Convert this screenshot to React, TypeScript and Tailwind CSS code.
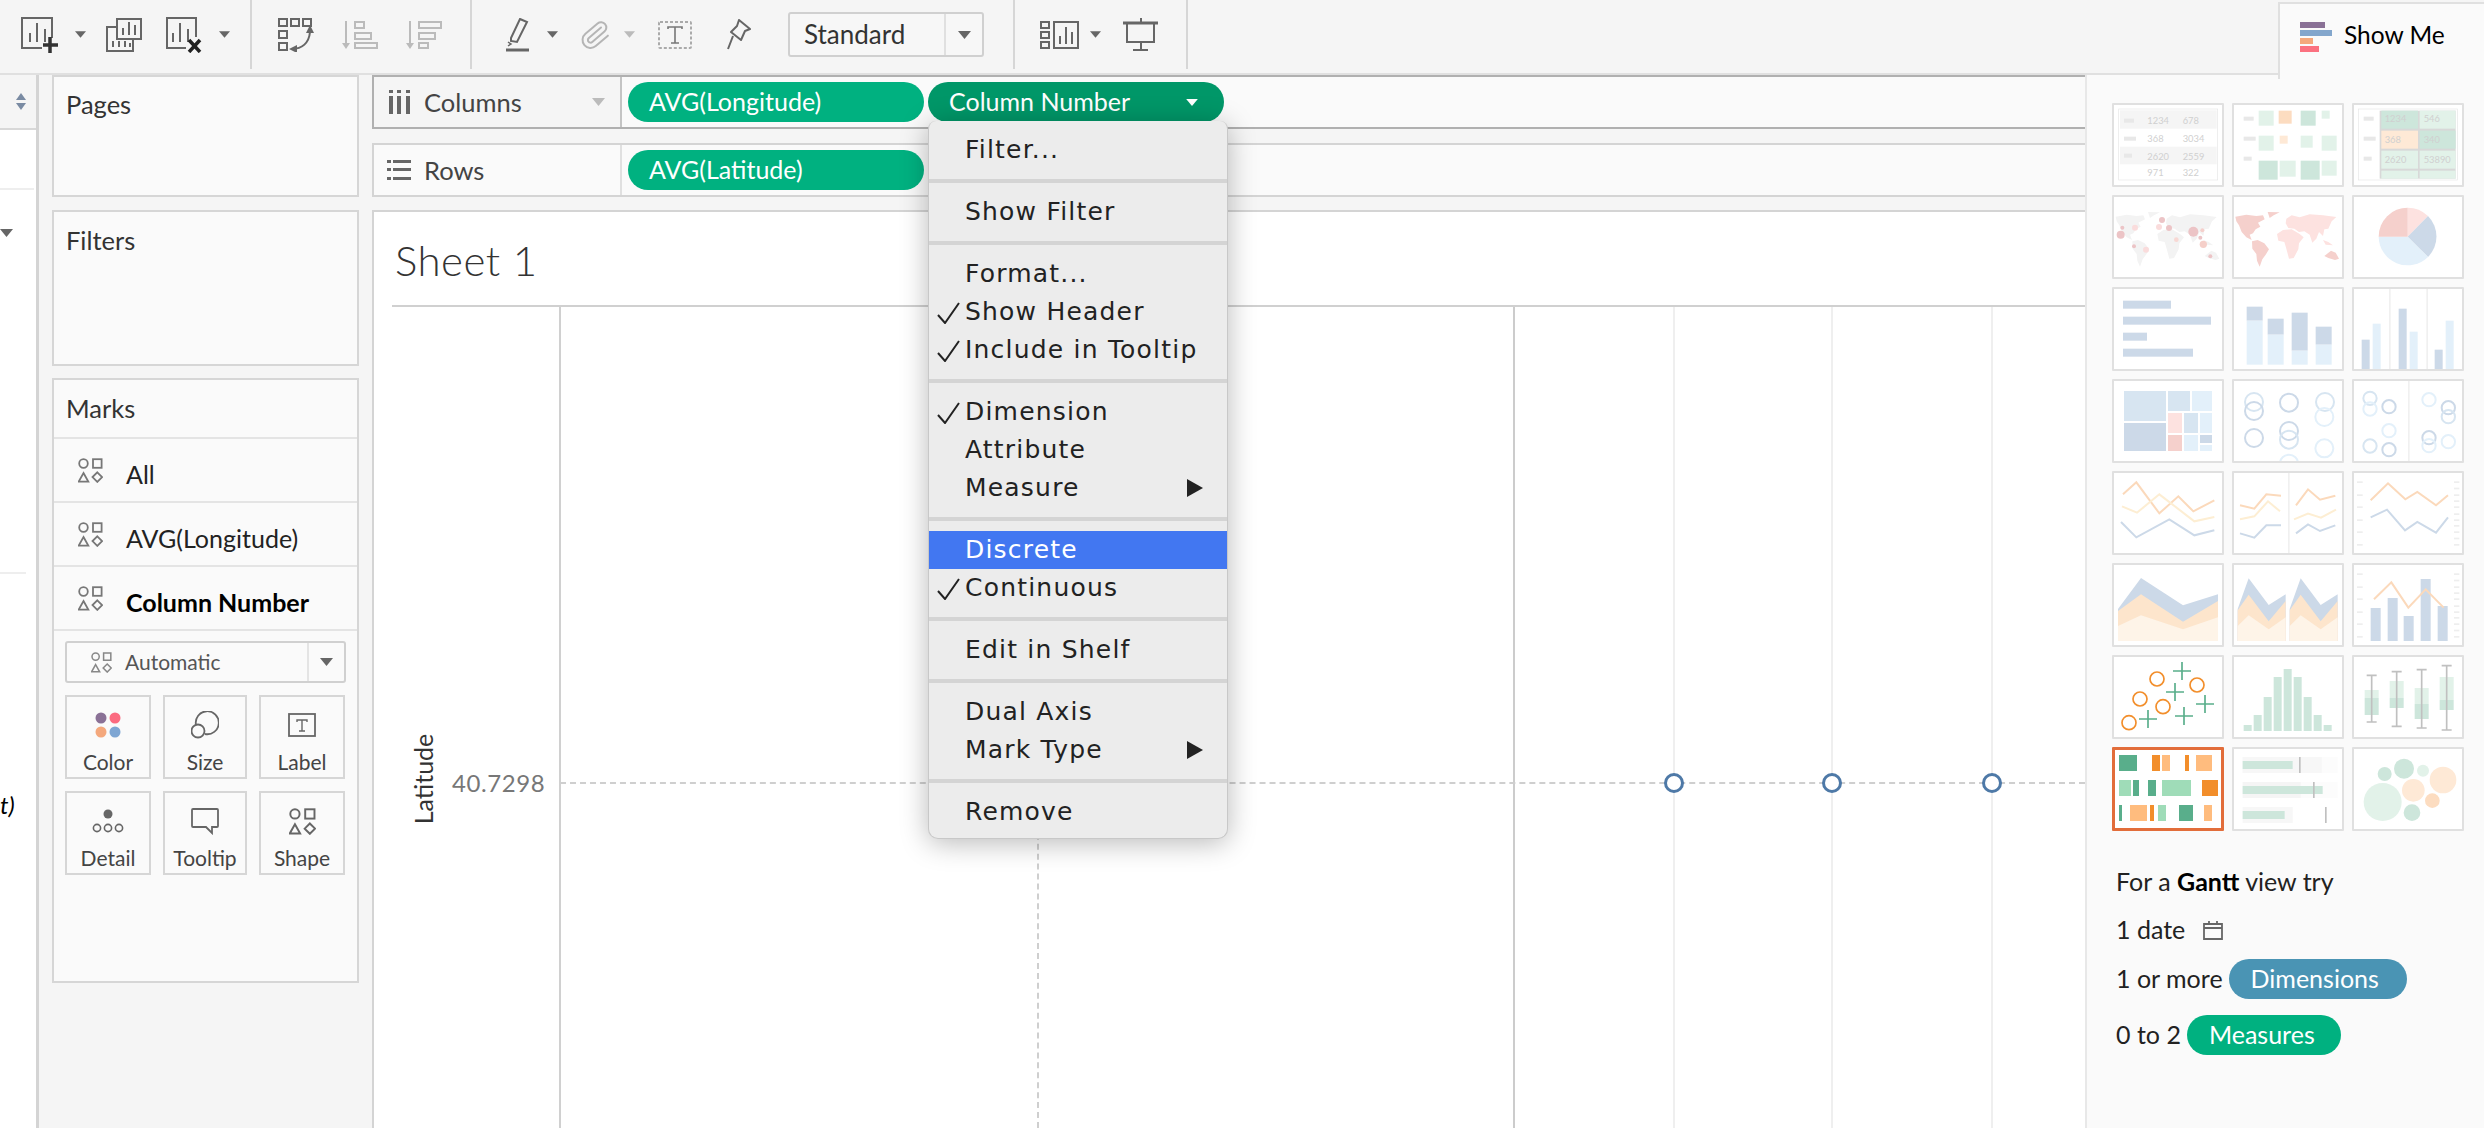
import React from 'react';
import { Paperclip } from 'lucide-react';

const Caret: React.FC<{ className?: string; w?: number; h?: number; color?: string }> = ({ className = '', w = 11, h = 7, color = '#666' }) => (
    <svg width={w} height={h} viewBox="0 0 10 6" className={className}>
        <path d="M0 0h10L5 6z" fill={color} />
    </svg>
);

const Sep: React.FC<{ className: string }> = ({ className }) => <div className={`w-[2px] h-[69px] bg-[#d6d6d6] ${className}`} />;

const NewSheetIcon = () => (
    <svg width="37" height="36" viewBox="0 0 37 36" className="ml-[21px]">
        <path d="M31 21V1H1v30h20" fill="none" stroke="#666" strokeWidth="2" />
        <path d="M9 25v-9M16 25V6M24 25V12" stroke="#666" strokeWidth="2" />
        <path d="M29 20v16M22 28h15" stroke="#333" strokeWidth="3.5" />
    </svg>
);

const DuplicateIcon = () => (
    <svg width="36" height="34" viewBox="0 0 36 34" className="ml-[20px]">
        <path d="M11 1h24v20H11z" fill="none" stroke="#666" strokeWidth="2" />
        <path d="M11 9H1v24h26V21" fill="none" stroke="#666" strokeWidth="2" />
        <path d="M17 17v-7M23 17V4M29 17V7M7 29v-6M13 29v-6M19 29v-6M24 29v-4" stroke="#666" strokeWidth="2" />
    </svg>
);

const ClearIcon = () => (
    <svg width="36" height="36" viewBox="0 0 36 36" className="ml-[24px]">
        <path d="M30 20V1H1v30h19" fill="none" stroke="#666" strokeWidth="2" />
        <path d="M7 25v-9M14 25V6M22 25V12" stroke="#666" strokeWidth="2" />
        <path d="M23 23l11 12M34 23L23 35" stroke="#222" strokeWidth="3.5" />
    </svg>
);

const SwapIcon = () => (
    <svg width="36" height="34" viewBox="0 0 36 34">
        <g fill="none" stroke="#666" strokeWidth="2">
            <rect x="1" y="1" width="8" height="7" />
            <rect x="13" y="1" width="8" height="7" />
            <rect x="25" y="1" width="8" height="7" />
            <rect x="1" y="13" width="8" height="7" />
            <rect x="1" y="25" width="8" height="7" />
            <path d="M14 31c10 0 17-6 18-17" />
        </g>
        <path d="M32 7l4 8h-8zM11 31l8-4v8z" fill="#666" />
    </svg>
);

const SortIcon: React.FC<{ desc?: boolean }> = ({ desc }) => (
    <svg width="36" height="28" viewBox="0 0 36 28" className="ml-[28px]">
        <path d="M4 0v24" stroke="#bbb" strokeWidth="2" />
        <path d="M0 22h8l-4 6z" fill="#bbb" />
        <g fill="none" stroke="#bbb" strokeWidth="2">
            {desc ? (
                <>
                    <rect x="13" y="1" width="22" height="6" />
                    <rect x="13" y="12" width="16" height="6" />
                    <rect x="13" y="22" width="9" height="5" />
                </>
            ) : (
                <>
                    <rect x="13" y="1" width="9" height="6" />
                    <rect x="13" y="12" width="16" height="6" />
                    <rect x="13" y="22" width="22" height="5" />
                </>
            )}
        </g>
    </svg>
);

const PenIcon = () => (
    <svg width="23" height="34" viewBox="0 0 23 34" className="ml-[34px]">
        <path d="M14 1l7 3-10 20-6-1 0-3z" fill="none" stroke="#666" strokeWidth="2" />
        <path d="M2 24l3 2-3 2" fill="none" stroke="#666" strokeWidth="1.5" />
        <path d="M0 32h23" stroke="#666" strokeWidth="3" />
    </svg>
);

const TextBoxIcon = () => (
    <svg width="34" height="28" viewBox="0 0 34 28" className="ml-[23px]">
        <rect x="1" y="1" width="32" height="26" rx="1" fill="none" stroke="#aaa" strokeWidth="2" strokeDasharray="3 2" />
        <path d="M10 8V6h14v2M17 6v16M13 22h8" fill="none" stroke="#777" strokeWidth="1.6" />
    </svg>
);

const PinIcon = () => (
    <svg width="26" height="31" viewBox="0 0 26 31" className="ml-[33px]">
        <path d="M14 1l11 9-5 2-4 9-10-8 6-6zM8 17L3 30" fill="none" stroke="#666" strokeWidth="2" strokeLinejoin="round" />
    </svg>
);

const ShowCardsIcon = () => (
    <svg width="39" height="28" viewBox="0 0 39 28">
        <g fill="none" stroke="#666" strokeWidth="2">
            <rect x="1" y="1" width="8" height="6" />
            <rect x="1" y="11" width="8" height="6" />
            <rect x="1" y="21" width="8" height="6" />
            <rect x="14" y="1" width="24" height="26" />
        </g>
        <path d="M20 23v-8M26 23V6M32 23V11" stroke="#666" strokeWidth="2" />
    </svg>
);

const PresentIcon = () => (
    <svg width="35" height="33" viewBox="0 0 35 33" className="ml-[22px]">
        <path d="M0 5h35" stroke="#666" strokeWidth="3" />
        <path d="M18 0v4M4 6v18h27V6M18 24v8M10 32h15" fill="none" stroke="#666" strokeWidth="2" />
    </svg>
);

const Toolbar = () => (
    <div className="h-[75px] flex border-b-2 border-[#e0e0e0] shrink-0 relative">
        <div className="flex items-center h-[69px] flex-1">
            <NewSheetIcon />
            <Caret className="ml-[17px]" />
            <DuplicateIcon />
            <ClearIcon />
            <Caret className="ml-[17px]" />
            <Sep className="ml-[20px] mr-[26px]" />
            <SwapIcon />
            <SortIcon />
            <SortIcon desc />
            <Sep className="ml-[28px]" />
            <PenIcon />
            <Caret className="ml-[18px]" />
            <Paperclip size={32} strokeWidth={1.5} color="#b5b5b5" className="ml-[21px] rotate-[5deg]" />
            <Caret className="ml-[13px]" color="#bbb" />
            <TextBoxIcon />
            <PinIcon />
            <div className="ml-[37px] w-[196px] h-[45px] border-2 border-[#d0d0d0] rounded-[3px] flex items-center bg-[#f7f7f7]">
                <span className="flex-1 pl-[14px] text-[26px] text-[#333]">Standard</span>
                <div className="w-[38px] h-full border-l-2 border-[#e0e0e0] flex items-center justify-center">
                    <Caret w={13} h={8} />
                </div>
            </div>
            <Sep className="ml-[29px] mr-[25px]" />
            <ShowCardsIcon />
            <Caret className="ml-[11px]" />
            <PresentIcon />
            <Sep className="ml-[28px]" />
        </div>
        <div className="w-[206px] h-[77px] mt-[2px] border-t-2 border-l-2 border-[#e0e0e0] bg-[#fafafa] flex items-center pl-[20px] gap-[12px] -mb-[2px] z-10 shrink-0">
            <div className="flex flex-col gap-[2px] w-[32px] -mt-[10px]">
                <div className="h-[6px] w-[25px] bg-[#8a7196]" />
                <div className="h-[6px] w-[32px] bg-[#83a6cc]" />
                <div className="h-[6px] w-[13px] bg-[#f4a87c]" />
                <div className="h-[6px] w-[19px] bg-[#fb7180]" />
            </div>
            <span className="text-[24.5px] text-black -mt-[12px]">Show Me</span>
        </div>
    </div>
);

const MarkShapes: React.FC<{ size?: number; color?: string }> = ({ size = 25, color = '#777' }) => (
    <svg width={size} height={size} viewBox="0 0 25 25" className="shrink-0">
        <g fill="none" stroke={color} strokeWidth="1.8">
            <circle cx="5.5" cy="5.5" r="4.3" />
            <rect x="15" y="1.2" width="8.6" height="8.6" />
            <path d="M5.5 15l4.8 8.6H.7z" />
            <path d="M19.3 14.3l4.8 4.8-4.8 4.8-4.8-4.800z" />
        </g>
    </svg>
);

const MarkRow: React.FC<{ label: string; bold?: boolean }> = ({ label, bold }) => (
    <div className="h-[64px] border-b-2 border-[#e4e4e4] flex items-center pl-[24px] gap-[23px] shrink-0">
        <MarkShapes />
        <span className={`text-[25px] mt-[10px] ${bold ? 'font-bold text-black' : 'text-[#222]'}`}>{label}</span>
    </div>
);

const MarkCard: React.FC<{ label: string; children: React.ReactNode }> = ({ label, children }) => (
    <div className="h-[84px] border-2 border-[#d6d6d6] flex flex-col items-center">
        <div className="h-[50px] flex items-center justify-center mt-[3px]">{children}</div>
        <span className="text-[21px] leading-[24px] text-[#444]">{label}</span>
    </div>
);

const SidePanels = () => (
    <div className="flex shrink-0 h-full">
        <div className="w-[39px] border-r-[3px] border-[#d4d4d4] flex flex-col shrink-0 bg-white overflow-hidden">
            <div className="h-[55px] bg-[#f5f5f5] border-b-2 border-[#d8d8d8] flex items-center justify-end pr-[9px] shrink-0">
                <svg width="12" height="18" viewBox="0 0 12 18">
                    <path d="M6 0l5 7H1z" fill="#7a8ba3" />
                    <path d="M1 10h10l-5 7z" fill="#7a8ba3" />
                </svg>
            </div>
            <div className="h-[60px] border-b-2 border-[#eee] mr-[2px] shrink-0" />
            <div className="h-[382px] pt-[39px] shrink-0">
                <Caret w={13} h={8} />
            </div>
            <div className="h-[2px] w-[26px] bg-[#eee] shrink-0" />
            <div className="mt-[216px] text-[24px] italic text-black leading-[30px] whitespace-nowrap">t)</div>
        </div>
        <div className="w-[333px] pl-[13px] pr-[13px] flex flex-col shrink-0">
            <div className="h-[122px] border-2 border-[#d6d6d6] bg-[#fafafa] pl-[12px] pt-[11px] text-[25.5px] leading-[32px] text-[#333] shrink-0">Pages</div>
            <div className="h-[156px] mt-[13px] border-2 border-[#d6d6d6] bg-[#fafafa] pl-[12px] pt-[12px] text-[25.5px] leading-[32px] text-[#333] shrink-0">Filters</div>
            <div className="h-[605px] mt-[12px] border-2 border-[#d6d6d6] bg-[#fafafa] flex flex-col shrink-0">
                <div className="h-[59px] border-b-2 border-[#e4e4e4] pl-[12px] flex items-center text-[25.5px] text-[#333] shrink-0">Marks</div>
                <MarkRow label="All" />
                <MarkRow label="AVG(Longitude)" />
                <MarkRow label="Column Number" bold />
                <div className="px-[11px] pt-[10px] flex flex-col gap-[12px]">
                    <div className="h-[42px] border-2 border-[#d0d0d0] rounded-[3px] flex items-center">
                        <div className="flex-1 flex items-center pl-[24px] gap-[13px] text-[21px] text-[#555]">
                            <MarkShapes size={21} color="#888" />
                            Automatic
                        </div>
                        <div className="w-[37px] h-full border-l-2 border-[#e4e4e4] flex items-center justify-center">
                            <Caret w={13} h={8} />
                        </div>
                    </div>
                    <div className="grid grid-cols-[86px_84px_86px] gap-x-[12px] gap-y-[12px]">
                        <MarkCard label="Color">
                            <svg width="26" height="26" viewBox="0 0 26 26">
                                <circle cx="6" cy="6" r="5.5" fill="#8a7196" />
                                <circle cx="20" cy="6" r="5.5" fill="#fb6b80" />
                                <circle cx="6" cy="20" r="5.5" fill="#f4a87c" />
                                <circle cx="20" cy="20" r="5.5" fill="#7ea6d3" />
                            </svg>
                        </MarkCard>
                        <MarkCard label="Size">
                            <svg width="28" height="28" viewBox="0 0 28 28" fill="none" stroke="#666" strokeWidth="1.8">
                                <path d="M5 14a11.5 11.5 0 1 1 9 9" />
                                <circle cx="7" cy="20" r="6.5" />
                            </svg>
                        </MarkCard>
                        <MarkCard label="Label">
                            <svg width="28" height="24" viewBox="0 0 28 24">
                                <rect x="1" y="1" width="26" height="22" fill="none" stroke="#666" strokeWidth="1.8" />
                                <path d="M9 9V7h10v2M14 7v11M11 18h6" fill="none" stroke="#666" strokeWidth="1.4" />
                            </svg>
                        </MarkCard>
                        <MarkCard label="Detail">
                            <svg width="32" height="26" viewBox="0 0 32 26">
                                <circle cx="16" cy="6" r="4.5" fill="#666" />
                                <g fill="none" stroke="#666" strokeWidth="1.6">
                                    <circle cx="5" cy="20" r="3.6" />
                                    <circle cx="16" cy="20" r="3.6" />
                                    <circle cx="27" cy="20" r="3.6" />
                                </g>
                            </svg>
                        </MarkCard>
                        <MarkCard label="Tooltip">
                            <svg width="28" height="27" viewBox="0 0 28 27">
                                <path d="M2 1h24a1 1 0 0 1 1 1v16a1 1 0 0 1-1 1h-5v6l-6-6H2a1 1 0 0 1-1-1V2a1 1 0 0 1 1-1z" fill="none" stroke="#666" strokeWidth="1.8" />
                            </svg>
                        </MarkCard>
                        <MarkCard label="Shape">
                            <MarkShapes size={27} color="#666" />
                        </MarkCard>
                    </div>
                </div>
            </div>
        </div>
    </div>
);

const Pill: React.FC<{ label: string; dark?: boolean }> = ({ label, dark }) => (
    <div className={`w-[296px] h-[40px] rounded-[20px] flex items-center justify-between pl-[21px] pr-[26px] text-[25px] text-white shrink-0 ${dark ? 'bg-[#009768]' : 'bg-[#00b180]'}`}>
        <span className="whitespace-nowrap">{label}</span>
        {dark && <Caret w={12} h={7} color="#fff" />}
    </div>
);

const ColumnsGlyph = () => (
    <svg width="21" height="24" viewBox="0 0 21 24">
        <path d="M0 0h4v3H0zM8 0h4v3H8zM17 0h4v3h-4zM0 6h4v18H0zM8 6h4v18H8zM17 6h4v18h-4z" fill="#666" />
    </svg>
);

const RowsGlyph = () => (
    <svg width="24" height="20" viewBox="0 0 24 20">
        <path d="M0 0h4v3H0zM6 0h18v3H6zM0 8h4v3H0zM6 8h18v3H6zM0 17h4v3H0zM6 17h18v3H6z" fill="#666" />
    </svg>
);

const Shelf: React.FC<{ label: string; glyph: React.ReactNode; active?: boolean; caret?: boolean; children: React.ReactNode; className?: string }> = ({ label, glyph, active, caret, children, className = '' }) => (
    <div className={`h-[54px] flex items-center border-y-2 border-l-2 bg-[#fafafa] shrink-0 ${active ? 'border-[#b0b0b0]' : 'border-[#d4d4d4]'} ${className}`}>
        <div className={`w-[248px] h-full flex items-center border-r-2 shrink-0 ${active ? 'bg-[#f5f5f5] border-[#c4c4c4]' : 'border-[#e0e0e0]'}`}>
            <div className="w-[24px] ml-[13px] flex justify-center">{glyph}</div>
            <span className="ml-[13px] text-[25.5px] text-[#444] flex-1">{label}</span>
            {caret && <Caret className="mr-[15px]" w={13} h={8} color="#bbb" />}
        </div>
        <div className="pl-[6px] flex gap-[4px]">{children}</div>
    </div>
);

const Check = () => (
    <svg width="23" height="22" viewBox="0 0 23 22" className="absolute left-[8px] top-[9px]">
        <path d="M1 13l7 8L22 1" fill="none" stroke="#222" strokeWidth="2" />
    </svg>
);

const MenuItem: React.FC<{ label: string; check?: boolean; sub?: boolean; active?: boolean }> = ({ label, check, sub, active }) => (
    <div className={`relative h-[38px] flex items-center pl-[36px] pr-[24px] justify-between ${active ? 'bg-[#4277f1] text-white' : 'text-[#222]'}`}>
        {check && <Check />}
        <span>{label}</span>
        {sub && (
            <svg width="16" height="18" viewBox="0 0 16 18">
                <path d="M0 0l16 9L0 18z" fill="#222" />
            </svg>
        )}
    </div>
);

const MenuGroup: React.FC<{ last?: boolean; children: React.ReactNode }> = ({ last, children }) => (
    <div className={`pt-[10px] ${last ? 'pb-[7px]' : 'pb-[10px] border-b-4 border-[#d4d4d4]'}`}>{children}</div>
);

const PillMenu = () => (
    <div className="absolute left-[928px] top-[121px] w-[300px] rounded-b-[10px] rounded-t-[8px] bg-[#ececec] shadow-[0_4px_28px_rgba(0,0,0,0.28)] border-x border-b border-[#c8c8c8] font-['DejaVu_Sans',sans-serif] text-[25px] z-20 tracking-[1.2px]">
        <MenuGroup><MenuItem label="Filter..." /></MenuGroup>
        <MenuGroup><MenuItem label="Show Filter" /></MenuGroup>
        <MenuGroup>
            <MenuItem label="Format..." />
            <MenuItem label="Show Header" check />
            <MenuItem label="Include in Tooltip" check />
        </MenuGroup>
        <MenuGroup>
            <MenuItem label="Dimension" check />
            <MenuItem label="Attribute" />
            <MenuItem label="Measure" sub />
        </MenuGroup>
        <MenuGroup>
            <MenuItem label="Discrete" active />
            <MenuItem label="Continuous" check />
        </MenuGroup>
        <MenuGroup><MenuItem label="Edit in Shelf" /></MenuGroup>
        <MenuGroup>
            <MenuItem label="Dual Axis" />
            <MenuItem label="Mark Type" sub />
        </MenuGroup>
        <MenuGroup last><MenuItem label="Remove" /></MenuGroup>
    </div>
);

const chartLines = [
    { x: 185, color: '#d0d0d0' },
    { x: 1139, color: '#cccccc' },
    { x: 1299, color: '#efefef' },
    { x: 1457, color: '#efefef' },
    { x: 1617, color: '#efefef' },
];

const Chart = () => (
    <div className="relative flex-1 overflow-hidden">
        {chartLines.map((l) => (
            <div key={l.x} className="absolute top-0 bottom-0 w-[2px]" style={{ left: l.x, background: l.color }} />
        ))}
        <div className="absolute left-[186px] right-0 top-[475px] border-t-2 border-dashed border-[#cfcfcf]" />
        <div className="absolute left-[663px] top-0 bottom-0 border-l-2 border-dashed border-[#cfcfcf]" />
        {[1300, 1458, 1618].map((x) => (
            <div key={x} className="absolute top-[466px] w-[20px] h-[20px] rounded-full bg-white border-[3px] border-[#4e79a7]" style={{ left: x - 10 }} />
        ))}
        <div className="absolute left-[78px] top-[476px] -translate-y-1/2 text-[24px] tracking-[0.6px] text-[#777] leading-none">40.7298</div>
        <div className="absolute left-[49px] top-[472px] -translate-x-1/2 -translate-y-1/2 -rotate-90 text-[25px] text-[#333] leading-none whitespace-nowrap">Latitude</div>
    </div>
);

const Thumb: React.FC<{ col: number; y0: number; selected?: boolean; children: React.ReactNode }> = ({ col, y0, selected, children }) => (
    <div className={`w-[112px] h-[84px] bg-white border-2 ${selected ? 'border-[#e26d3a] outline-2 outline-[#e26d3a] -outline-offset-3' : 'border-[#e0e0e0]'} rounded-[1px] overflow-hidden`}>
        <svg width="108" height="80" viewBox={`${[72, 433, 793][col]} ${y0 + 6} 324 240`} className="block">
            {children}
        </svg>
    </div>
);

type R = [number, number, number, number, string];
const Rects: React.FC<{ items: R[] }> = ({ items }) => (
    <>
        {items.map(([x1, x2, y1, y2, fill], i) => (
            <rect key={i} x={x1} y={y1} width={x2 - x1} height={y2 - y1} fill={fill} />
        ))}
    </>
);

type C = [number, number, number, string];
const Circles: React.FC<{ items: C[]; stroke?: number }> = ({ items, stroke }) => (
    <>
        {items.map(([cx, cy, r, c], i) =>
            stroke ? (
                <circle key={i} cx={cx} cy={cy} r={r} fill="none" stroke={c} strokeWidth={stroke} />
            ) : (
                <circle key={i} cx={cx} cy={cy} r={r} fill={c} />
            ),
        )}
    </>
);

const Line: React.FC<{ pts: string; color: string }> = ({ pts, color }) => (
    <polyline points={pts} fill="none" stroke={color} strokeWidth="6" />
);

const NumText: React.FC<{ x: number; y: number; t: string }> = ({ x, y, t }) => (
    <text x={x} y={y} fontSize="28" fill="#d0d0d0">{t}</text>
);

const G1 = '#e2f2e9', G2 = '#cde6db', O1 = '#fcdcc0', O2 = '#fee9d6';
const B1 = '#ccd9e8', B2 = '#e3f0fa', B3 = '#d7e5f1', R1 = '#f5d0cc', R2 = '#fde2e0';
const LO = '#fbd9bb', LY = '#fdeed3';
const GD = '#59ae8b', GL = '#9fdcb8', OD = '#f28e2b', OL = '#ffbc7e';

const mapPaths = (c1: string, c2: string, dx: number) => (
    <g transform={`translate(${dx} 0)`}>
        <path d="M437 654L470 648 500 652 520 650 525 662 505 672 512 684 498 692 490 704 480 708 486 724 470 716 456 700 448 680 440 668z" fill={c1} />
        <path d="M534 640L570 641 552 650 540 658z" fill={c1} />
        <path d="M487 728L504 724 524 734 538 752 528 768 518 782 510 804 502 786 500 766 488 750z" fill={c1} />
        <path d="M590 660L606 650 630 656 660 647 700 650 740 655 726 668 716 690 704 692 700 712 688 700 680 720 668 732 660 708 644 698 628 700 614 690 596 688 588 674z" fill={c2} />
        <path d="M562 706L580 694 606 692 630 706 642 716 628 734 626 752 612 778 598 780 590 750 584 730 566 726z" fill={c2} />
        <path d="M700 724L716 730 730 740 708 738z" fill={c2} />
        <path d="M704 772L724 756 738 762 748 780 736 784 716 778z" fill={c1} />
    </g>
);

const dashes = (xs: [number, number], ys: number[]): R[] => ys.map((y) => [xs[0], xs[1], y - 2, y + 3, '#eeeeee'] as R);
const ticks6 = [0, 39, 75, 114, 150, 188];
const ticks11 = [0, 19, 39, 57, 75, 96, 114, 131, 150, 169, 188];

const ShowMeGrid = () => (
    <div className="grid grid-cols-[112px_112px_112px] gap-x-[8px] gap-y-[8px]">
        <Thumb col={0} y0={313}>
            <rect x="86" y="331" width="297" height="213" fill="none" stroke="#e6e6e6" strokeWidth="2" />
            <Rects items={[[90, 380, 335, 390, '#f5f5f5'], [90, 380, 444, 497, '#f5f5f5'], [102, 132, 360, 372, '#e8e8e8'], [102, 138, 414, 426, '#e8e8e8'], [102, 126, 465, 477, '#e8e8e8']]} />
            <NumText x={172} y={375} t="1234" /><NumText x={278} y={375} t="678" />
            <NumText x={172} y={429} t="368" /><NumText x={278} y={429} t="3034" />
            <NumText x={172} y={483} t="2620" /><NumText x={278} y={483} t="2559" />
            <NumText x={172} y={531} t="971" /><NumText x={278} y={531} t="322" />
        </Thumb>
        <Thumb col={1} y0={313}>
            <Rects items={[[462, 492, 354, 366, '#e8e8e8'], [462, 498, 414, 426, '#e8e8e8'], [462, 486, 474, 486, '#e8e8e8'],
                [507, 552, 336, 381, G1], [567, 606, 336, 375, O1], [633, 678, 336, 381, G2], [696, 720, 336, 360, G1],
                [507, 552, 411, 456, G1], [570, 594, 411, 435, O2], [633, 669, 411, 447, G1], [696, 741, 411, 456, G1],
                [507, 564, 486, 543, G2], [570, 618, 486, 534, G1], [633, 690, 486, 543, G2], [696, 741, 486, 531, G1]]} />
        </Thumb>
        <Thumb col={2} y0={313}>
            <rect x="806" y="331" width="297" height="213" fill="none" stroke="#e6e6e6" strokeWidth="2" />
            <Rects items={[[822, 852, 354, 366, '#e8e8e8'], [822, 858, 414, 426, '#e8e8e8'], [822, 846, 474, 486, '#e8e8e8'],
                [870, 1098, 336, 540, '#d8d8d8'],
                [875, 985, 336, 390, G2], [990, 1098, 336, 390, G1], [875, 985, 396, 450, O2], [990, 1098, 396, 450, G2],
                [875, 985, 456, 510, G1], [990, 1098, 456, 510, G1], [875, 985, 516, 540, G1], [990, 1098, 516, 540, G1]]} />
            <NumText x={885} y={370} t="1234" /><NumText x={1002} y={370} t="546" />
            <NumText x={885} y={432} t="368" /><NumText x={1002} y={432} t="340" />
            <NumText x={885} y={492} t="2620" /><NumText x={1002} y={492} t="53890" />
        </Thumb>

        <Thumb col={0} y0={589}>
            {mapPaths('#f3f3f3', '#f3f3f3', -360)}
            <Circles items={[[216, 664, 9, '#ecc4c6'], [97, 687, 6, '#ecc4c6'], [135, 687, 9, '#fadcdc'], [207, 685, 9, '#fadcdc'], [237, 688, 9, '#ecc4c6'], [92, 708, 12, '#ecc4c6'], [310, 699, 15, '#ecc4c6'], [337, 695, 6, '#f5d0cc'], [331, 717, 6, '#ecc4c6'], [259, 723, 7, '#f8d8d4'], [340, 737, 11, '#f5cfc9'], [132, 743, 6, '#ecc4c6'], [168, 753, 9, '#fadcdc'], [361, 773, 6, '#ecc4c6']]} />
        </Thumb>
        <Thumb col={1} y0={589}>{mapPaths(R1, R2, 0)}</Thumb>
        <Thumb col={2} y0={589}>
            <path d="M954 714V627A87 87 0 0 1 1015 652z" fill={R2} />
            <path d="M954 714L1015 652A87 87 0 0 1 1015 775z" fill={B1} />
            <path d="M954 714L1015 775A87 87 0 0 1 867 714z" fill={B2} />
            <path d="M954 714H867A87 87 0 0 1 954 627z" fill={R1} />
        </Thumb>

        <Thumb col={0} y0={865}>
            <Rects items={[[99, 243, 906, 930, B1], [99, 363, 954, 978, B1], [99, 171, 1002, 1026, B1], [99, 309, 1050, 1074, B1]]} />
        </Thumb>
        <Thumb col={1} y0={865}>
            <Rects items={[[471, 519, 924, 966, B1], [471, 519, 966, 1098, B2], [534, 582, 960, 1008, B1], [534, 582, 1008, 1098, B2], [606, 654, 942, 1056, B1], [606, 654, 1056, 1098, B2], [678, 726, 984, 1038, B1], [678, 726, 1038, 1098, B2]]} />
        </Thumb>
        <Thumb col={2} y0={865}>
            <Rects items={[[898, 903, 865, 1115, '#f0f0f0'], [1010, 1015, 865, 1115, '#f0f0f0'], [816, 840, 1023, 1115, B1], [849, 873, 975, 1115, B2], [927, 951, 930, 1115, B1], [960, 984, 999, 1115, B2], [1035, 1059, 1053, 1115, B1], [1068, 1092, 966, 1115, B2]]} />
        </Thumb>

        <Thumb col={0} y0={30}>
            <Rects items={[[102, 228, 66, 156, B3], [234, 300, 66, 126, B3], [306, 366, 66, 126, B2], [102, 228, 162, 246, B1], [234, 276, 132, 192, R2], [282, 324, 132, 192, B3], [330, 366, 132, 192, B2], [234, 276, 198, 246, R1], [282, 324, 198, 246, B2], [330, 366, 198, 222, B1], [330, 366, 228, 246, B2]]} />
        </Thumb>
        <Thumb col={1} y0={30}>
            <Circles stroke={6} items={[[493, 99, 27, B3], [493, 126, 27, B1], [598, 101, 27, B1], [706, 99, 27, B3], [704, 144, 27, B2], [493, 207, 27, B1], [598, 186, 27, B1], [598, 212, 27, B3], [704, 238, 27, B2], [598, 284, 27, B2]]} />
        </Thumb>
        <Thumb col={2} y0={30}>
            <rect x="955" y="30" width="5" height="250" fill="#f0f0f0" />
            <Circles stroke={6} items={[[841, 88, 20, B3], [841, 120, 20, B2], [898, 113, 20, B1], [898, 185, 20, B2], [841, 231, 20, B3], [898, 242, 20, B1], [1018, 92, 20, B2], [1076, 116, 20, B1], [1076, 143, 20, B3], [1018, 206, 20, B1], [1018, 230, 20, B2], [1076, 218, 20, B2]]} />
        </Thumb>

        <Thumb col={0} y0={306}>
            <Line pts="99,376 139,340 208,433 265,382 310,427 373,394" color={LO} />
            <Line pts="96,412 141,431 208,376 313,457 373,444" color={LY} />
            <Line pts="93,459 139,505 238,451 313,499 373,484" color={B1} />
        </Thumb>
        <Thumb col={1} y0={306}>
            <rect x="595" y="306" width="5" height="250" fill="#f0f0f0" />
            <Line pts="451,409 494,419 530,376 574,380" color={LO} />
            <Line pts="451,451 494,442 535,397 571,427" color={LY} />
            <Line pts="451,493 494,506 530,469 574,469" color={B1} />
            <Line pts="619,409 655,361 691,392 737,380" color={LO} />
            <Line pts="613,451 655,434 694,446 739,422" color={LY} />
            <Line pts="619,493 655,466 691,486 737,469" color={B1} />
        </Thumb>
        <Thumb col={2} y0={306}>
            <Rects items={[...dashes([802, 819], ticks6.map((t) => t + 339)), ...dashes([1093, 1109], ticks11.map((t) => t + 339))]} />
            <Line pts="843,394 895,343 947,391 983,369 1039,409 1075,379" color={LO} />
            <Line pts="843,445 892,422 946,484 983,459 1039,491 1075,445" color={B1} />
        </Thumb>

        <Thumb col={0} y0={582}>
            <path d="M84 720L153 627 279 709 384 676V816H84z" fill={B1} />
            <path d="M84 726L153 676 279 758 384 696V816H84z" fill="#fde5cc" />
            <path d="M84 771L153 739 279 781 384 745V816H84z" fill="#fef4e8" />
        </Thumb>
        <Thumb col={1} y0={582}>
            <path d="M444 720L477 628 537 708 588 676V816H444z" fill={B1} />
            <path d="M444 724L477 677 537 757 588 696V816H444z" fill="#fde5cc" />
            <path d="M444 771L477 739 537 781 588 745V816H444z" fill="#fef4e8" />
            <path d="M600 720L633 628 693 708 744 676V816H600z" fill={B1} />
            <path d="M600 724L633 677 693 757 744 696V816H600z" fill="#fde5cc" />
            <path d="M600 771L633 739 693 781 744 745V816H600z" fill="#fef4e8" />
        </Thumb>
        <Thumb col={2} y0={582}>
            <Rects items={[...dashes([802, 819], ticks6.map((t) => t + 615)), ...dashes([1093, 1109], ticks11.map((t) => t + 615)), [843, 873, 717, 816, B1], [894, 924, 687, 816, B1], [942, 972, 741, 816, B1], [993, 1023, 630, 816, B1], [1044, 1074, 711, 816, B1]]} />
            <Line pts="853,691 905,640 956,716 1008,661 1062,716" color={LO} />
        </Thumb>

        <Thumb col={0} y0={-12}>
            <Circles stroke={5} items={[[201, 60, 21, OD], [321, 78, 21, OD], [150, 120, 21, OD], [219, 143, 21, OD], [117, 191, 21, OD]]} />
            {[[276, 36], [255, 99], [345, 135], [174, 180], [282, 171]].map(([x, y]) => (
                <path key={x} d={`M${x - 27} ${y}h54M${x} ${y - 27}v54`} stroke={GD} strokeWidth="5" />
            ))}
        </Thumb>
        <Thumb col={1} y0={-12}>
            <Rects items={[[462, 486, 198, 216, G2], [492, 516, 168, 216, G2], [522, 546, 114, 216, G2], [552, 576, 54, 216, G2], [582, 606, 30, 216, G2], [612, 636, 54, 216, G2], [642, 666, 114, 216, G2], [672, 696, 168, 216, G2], [702, 726, 198, 216, G2]]} />
        </Thumb>
        <Thumb col={2} y0={-12}>
            <Rects items={[[825, 867, 93, 117, G1], [825, 867, 117, 168, G2], [900, 942, 66, 117, G1], [900, 942, 117, 147, G2], [975, 1017, 87, 135, G1], [975, 1017, 135, 180, G2], [1050, 1092, 54, 123, G1], [1050, 1092, 123, 153, G2]]} />
            {[[846, 49, 189], [921, 38, 202], [996, 32, 207], [1071, 20, 213]].map(([x, a, b]) => (
                <path key={x} d={`M${x - 15} ${a}h30M${x} ${a}V${b}M${x - 15} ${b}h30`} fill="none" stroke="#c0c0c0" strokeWidth="5" />
            ))}
        </Thumb>

        <Thumb col={0} y0={264} selected>
            <Rects items={[[87, 141, 288, 336, GD], [186, 210, 288, 336, OD], [216, 240, 288, 336, OL], [285, 297, 288, 336, OD], [318, 366, 288, 336, OL],
                [87, 123, 363, 411, GL], [129, 147, 363, 411, GD], [174, 198, 363, 411, GD], [216, 303, 363, 411, GL], [336, 384, 363, 411, OD],
                [87, 96, 438, 486, GD], [120, 171, 438, 486, OL], [180, 192, 438, 486, OD], [204, 228, 438, 486, GL], [267, 309, 438, 486, GD], [342, 366, 438, 486, OL]]} />
        </Thumb>
        <Thumb col={1} y0={264}>
            <Rects items={[[459, 744, 294, 342, '#fcfcfc'], [459, 696, 294, 342, '#f7f7f7'], [459, 609, 306, 330, G2], [628, 633, 294, 342, '#c0c0c0'],
                [459, 744, 369, 417, '#fcfcfc'], [459, 633, 369, 417, '#f5f5f5'], [459, 699, 381, 405, G2], [670, 675, 369, 417, '#c0c0c0'],
                [459, 609, 444, 492, '#f7f7f7'], [459, 585, 456, 480, G2], [706, 711, 444, 492, '#c0c0c0']]} />
        </Thumb>
        <Thumb col={2} y0={264}>
            <Circles items={[[879, 429, 57, G1], [943, 329, 30, G2], [885, 345, 21, G2], [1000, 335, 18, G1], [1060, 363, 40, O2], [971, 394, 34, O2], [1028, 425, 22, O1], [967, 461, 25, G2]]} />
        </Thumb>
    </div>
);

const ShowMe = () => (
    <div className="flex-1 border-l-2 border-[#e8e8e8] bg-[#fafafa] pl-[25px] pt-[28px] text-[25px] text-[#222] min-w-0">
        <ShowMeGrid />
        <div className="pl-[4px] mt-[33px] flex flex-col">
            <div className="h-[36px] flex items-center"><span>For a <b className="text-black">Gantt</b> view try</span></div>
            <div className="h-[36px] mt-[12px] flex items-center">
                1 date
                <svg width="20" height="20" viewBox="0 0 20 20" className="ml-[18px]">
                    <path d="M1 4h18v15H1zM1 8h18M6 1v4M14 1v4" fill="none" stroke="#666" strokeWidth="1.8" />
                </svg>
            </div>
            <div className="mt-[11px] flex items-center">
                1 or more
                <div className="ml-[6px] h-[40px] w-[178px] rounded-[20px] bg-[#4a94b4] text-white flex items-center pl-[22px]">Dimensions</div>
            </div>
            <div className="mt-[16px] flex items-center">
                0 to 2
                <div className="ml-[6px] h-[40px] w-[154px] rounded-[20px] bg-[#00b180] text-white flex items-center pl-[22px]">Measures</div>
            </div>
        </div>
    </div>
);

export default function App() {
    return (
        <div className="relative w-[2484px] h-[1128px] overflow-hidden bg-[#f5f5f5] font-['Lato',sans-serif] flex flex-col">
            <Toolbar />
            <div className="flex flex-1 min-h-0">
                <SidePanels />
                <div className="w-[1713px] flex flex-col shrink-0">
                    <Shelf label="Columns" glyph={<ColumnsGlyph />} active caret>
                        <Pill label="AVG(Longitude)" />
                        <Pill label="Column Number" dark />
                    </Shelf>
                    <Shelf label="Rows" glyph={<RowsGlyph />} className="mt-[14px]">
                        <Pill label="AVG(Latitude)" />
                    </Shelf>
                    <div className="mt-[13px] flex-1 min-h-0 bg-white border-t-2 border-l-2 border-[#d4d4d4] flex flex-col">
                        <div className="h-[95px] ml-[18px] border-b-2 border-[#d0d0d0] pl-[3px] pt-[4px] flex items-center text-[42px] tracking-[0.5px] font-light text-[#333] shrink-0">Sheet 1</div>
                        <Chart />
                    </div>
                </div>
                <ShowMe />
            </div>
            <PillMenu />
        </div>
    );
}
